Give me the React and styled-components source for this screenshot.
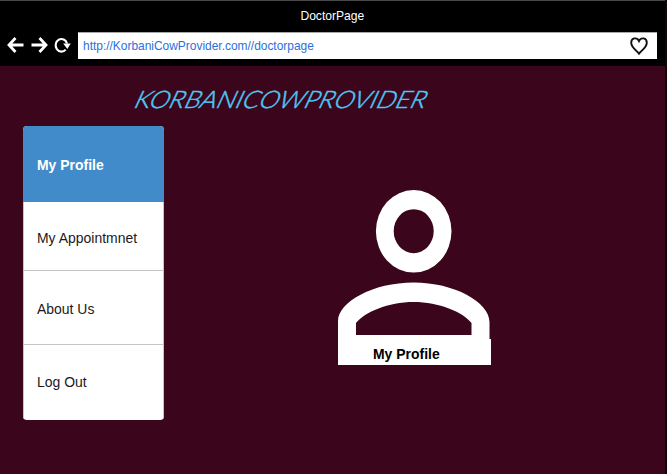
import React from "react";
import styled, { createGlobalStyle } from "styled-components";

const GlobalStyle = createGlobalStyle`
  html, body { margin: 0; background: #3b051b; }
  * { box-sizing: border-box; }
`;

const Window = styled.div`
  width: 667px;
  height: 474px;
  overflow: hidden;
  background: #3b051b;
  border-right: 2px solid #12020a;
  font-family: "Liberation Sans", Arial, sans-serif;
`;

const Chrome = styled.header`
  width: 667px;
  height: 66px;
  background: #000;
  border-top: 1px solid #484848;
`;

const Text = styled.span`
  display: inline-block;
  white-space: pre;
  transform: scaleX(${(p) => p.$scale || 0.93});
  transform-origin: ${(p) => p.$origin || "left"} center;
`;

const TitleBar = styled.div`
  height: 31px;
  display: flex;
  justify-content: center;
  padding: 7px 2px 0 0;
  font-size: 13px;
  line-height: 15px;
  color: #fff;
`;

const Toolbar = styled.div`
  display: flex;
  height: 27px;
`;

const NavIcons = styled.div`
  width: 77px;
  flex: none;
  svg { display: block; }
`;

const AddressBar = styled.div`
  width: 579px;
  height: 27px;
  margin-left: 1px;
  padding: 0 8px 0 5px;
  display: flex;
  align-items: center;
  justify-content: space-between;
  background: #fff;
  border-top: 1px solid #aaa;
  color: #2a70dc;
  font-size: 13px;
  line-height: 15px;
  ${Text} { margin-bottom: 2px; }
`;

const Page = styled.main`
  display: grid;
  grid-template-columns: 164px 1fr;
  grid-template-rows: 60px auto;
`;

const Brand = styled.h1`
  grid-column: 1 / -1;
  margin: 0;
  padding: 18px 0 0 134px;
  svg { display: block; }
`;

const BrandText = styled.text`
  font-family: Lato, "Liberation Sans", sans-serif;
  font-style: italic;
  font-weight: 300;
  font-size: 24px;
  fill: #4cc8f4;
  stroke: #4cc8f4;
  stroke-width: 0.45px;
`;

const Menu = styled.nav`
  margin-left: 23px;
  width: 141px;
  height: 294px;
  border-radius: 4px;
  overflow: hidden;
  background: #fff;
`;

const MenuItem = styled.a`
  display: flex;
  height: ${(p) => p.$height}px;
  padding: ${(p) => p.$top}px 0 0 ${(p) => (p.$active ? 14 : 13)}px;
  border: solid ${(p) => (p.$active ? "#428bca" : "#c8c4c6")};
  border-width: ${(p) => (p.$divided ? 1 : 0)}px ${(p) => (p.$active ? 0 : 1)}px 0;
  background: ${(p) => (p.$active ? "#428bca" : "transparent")};
  color: ${(p) => (p.$active ? "#fff" : "#1c1820")};
  font-size: 15px;
  font-weight: ${(p) => (p.$active ? 700 : 400)};
  line-height: 18px;
`;

const Profile = styled.section`
  margin: 64px 0 0 174px;
  width: 153px;
`;

const Avatar = styled.svg`
  display: block;
`;

const Caption = styled.div`
  height: 26px;
  margin-top: -1px;
  padding: 6px 0 0 35px;
  background: #fff;
  color: #000;
  font-size: 15px;
  font-weight: 700;
  line-height: 18px;
`;

const items = [
  { label: "My Profile", height: 76, top: 30, active: true },
  { label: "My Appointmnet", height: 68, top: 27 },
  { label: "About Us", height: 74, top: 29, divided: true },
  { label: "Log Out", height: 76, top: 28, divided: true },
];

export default function App() {
  return (
    <>
      <GlobalStyle />
      <Window>
        <Chrome>
          <TitleBar><Text $origin="center">DoctorPage</Text></TitleBar>
          <Toolbar>
            <NavIcons>
              <svg width="77" height="27" viewBox="0 32 77 27" fill="none" stroke="#fff" strokeWidth="2.8">
                <path d="M23.5 45H9.5M15.5 38L9 45L15.5 52" />
                <path d="M31.5 45H45.5M39.5 38L46 45L39.5 52" />
                <path d="M65.7 49.6A5.8 6.3 0 1 1 67 43.5" strokeWidth="2.1" />
                <path d="M63.2 43.5H70.7L67.3 49Z" fill="#fff" stroke="none" />
              </svg>
            </NavIcons>
            <AddressBar>
              <Text $scale={0.918}>http://KorbaniCowProvider.com//doctorpage</Text>
              <svg width="20" height="20" viewBox="0 0 20 20" fill="none" stroke="#111" strokeWidth="1.9">
                <path d="M10 17.6C8 15 2.2 11.5 2.2 6.7C2.2 1.8 8 0.8 10 5C12 0.8 17.8 1.8 17.8 6.7C17.8 11.5 12 15 10 17.6Z" />
              </svg>
            </AddressBar>
          </Toolbar>
        </Chrome>
        <Page>
          <Brand>
            <svg width="300" height="30" viewBox="0 0 300 30" overflow="visible">
              <BrandText x="2" y="24" textLength="291" lengthAdjust="spacingAndGlyphs" transform="skewX(-18) translate(5 0)">
                KORBANICOWPROVIDER
              </BrandText>
            </svg>
          </Brand>
          <Menu>
            {items.map((item) => (
              <MenuItem key={item.label} $height={item.height} $top={item.top} $active={item.active} $divided={item.divided}>
                <Text>{item.label}</Text>
              </MenuItem>
            ))}
          </Menu>
          <Profile>
            <Avatar width="153" height="150" viewBox="338 190 153 150">
              <path fill="#fff" fillRule="evenodd" d="M413.7 190A37.8 41.3 0 1 1 413.7 272.6A37.8 41.3 0 1 1 413.7 190ZM413.7 209.2A20 22 0 1 0 413.7 253.2A20 22 0 1 0 413.7 209.2Z" />
              <path fill="#fff" fillRule="evenodd" d="M338 340V321C338 302 373 282.5 413.7 282.5C454 282.5 489.5 302 489.5 322V340ZM356 335H471.5V323C463 312 439 302 413.7 302C388 302 365 312 356 323Z" />
            </Avatar>
            <Caption><Text>My Profile</Text></Caption>
          </Profile>
        </Page>
      </Window>
    </>
  );
}
